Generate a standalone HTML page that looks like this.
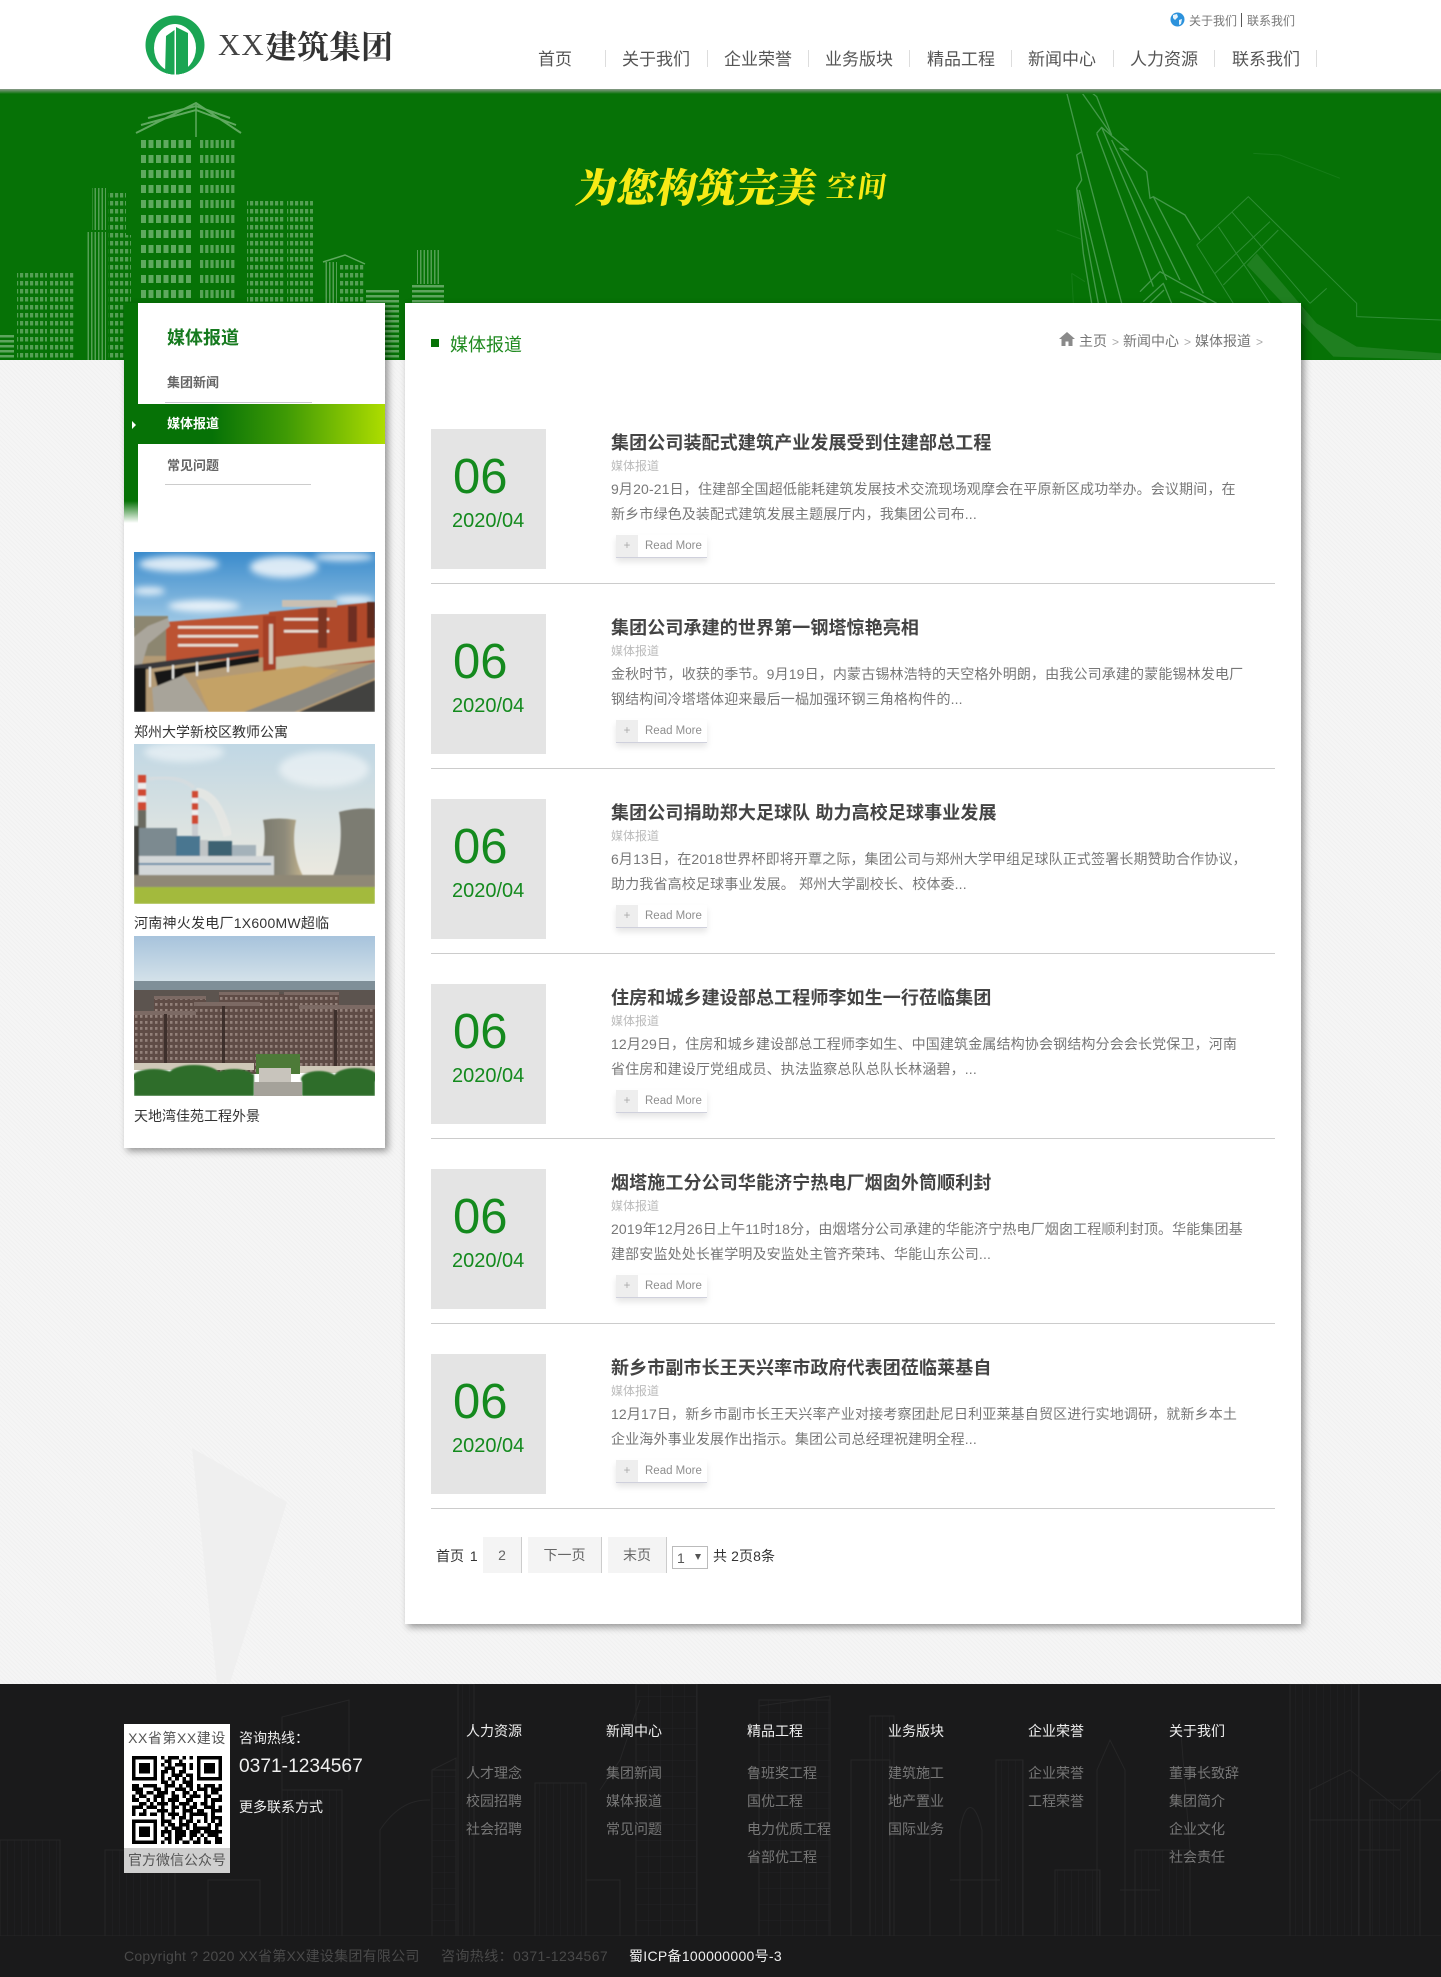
<!DOCTYPE html>
<html lang="zh-CN">
<head>
<meta charset="utf-8">
<title>媒体报道</title>
<style>
*{margin:0;padding:0;box-sizing:border-box}
html,body{width:1441px;height:1977px;overflow:hidden;background:#f3f3f3}
body{position:relative;font-family:"Liberation Sans","Noto Sans CJK SC",sans-serif;font-size:14px;color:#555}
.a{position:absolute;white-space:nowrap}
.hatch{position:absolute;left:0;top:360px;width:1441px;height:1324px;background:repeating-linear-gradient(45deg,#f1f1f1 0 1px,#f5f5f5 1px 3px)}
.nav{font-size:17px;line-height:24px;top:48px;color:#555}
.sep{position:absolute;top:50px;width:1px;height:17px;background:#ddd}
.card{position:absolute;background:#fff;box-shadow:3px 3px 7px rgba(0,0,0,.4)}
.item{position:absolute;left:431px;width:844px;height:155px;border-bottom:1px solid #ccc}
.box{position:absolute;left:0;top:0;width:115px;height:140px;background:#e4e4e4}
.d1{position:absolute;left:22px;top:19px;font-size:49px;line-height:58px;color:#148a1e;white-space:nowrap}
.d2{position:absolute;left:21px;top:80px;font-size:20px;line-height:24px;color:#148a1e;white-space:nowrap}
.t{position:absolute;left:180px;top:2px;font-size:18px;line-height:24px;font-weight:700;color:#444;white-space:nowrap;letter-spacing:.12px}
.c{position:absolute;left:180px;top:29px;font-size:12px;line-height:16px;color:#bbb;white-space:nowrap}
.l{position:absolute;left:180px;font-size:14px;line-height:22px;color:#777;white-space:nowrap;letter-spacing:.15px}
.l1{top:49px}.l2{top:74px}
.rm{position:absolute;left:185px;top:106px;width:91px;height:23px;background:#fff;border-bottom:1px solid #cfd0dc;box-shadow:0 4px 6px rgba(0,0,0,.1);font-size:11.5px;line-height:22px;color:#8e8e8e}
.rm i{position:absolute;left:0;top:0;width:22px;height:22px;background:#eeeeee;font-style:normal;text-align:center;color:#aaa}
.rm span{position:absolute;left:29px;top:0}
.pg{position:absolute;top:1537px;height:36px;background:#f4f4f4;border-right:1px solid #ccc;line-height:37px;text-align:center;color:#666}
.fh{top:1720px;line-height:22px;color:#eee;font-size:14px}
.fi{line-height:22px;color:#777;font-size:14px}
.cap{font-size:14px;line-height:20px;color:#333;left:134px}
</style>
</head>
<body>
<div class="hatch"></div>
<svg class="a" style="left:0;top:1400px" width="420" height="290"><polygon points="192,48 287,102 230,283 217,283" fill="#eeeeee" opacity=".9"/></svg>

<!-- banner -->
<svg class="a" style="left:0;top:90px" width="1441" height="270" viewBox="0 90 1441 270">
<defs>
<pattern id="w1" width="7.5" height="15" patternUnits="userSpaceOnUse" x="141" y="137"><rect x="0" y="3" width="5" height="8" fill="#5fa95f"/></pattern>
<pattern id="w2" width="5.2" height="15" patternUnits="userSpaceOnUse" x="200" y="137"><rect x="0" y="3" width="3.2" height="8" fill="#58a458"/></pattern>
<pattern id="w3" width="5" height="8" patternUnits="userSpaceOnUse"><rect x="0" y="1" width="3.2" height="4.5" fill="#549f54"/></pattern>
<pattern id="st" width="4" height="5" patternUnits="userSpaceOnUse"><rect width="4" height="2.5" fill="#5ea55e"/></pattern>
<pattern id="vs" width="3.5" height="6" patternUnits="userSpaceOnUse"><rect width="1.5" height="6" fill="#549f54"/></pattern>
</defs>
<rect x="0" y="90" width="1441" height="270" fill="#067206"/>
<!-- main tower -->
<rect x="141" y="137" width="52" height="170" fill="url(#w1)"/>
<rect x="200" y="137" width="36" height="170" fill="url(#w2)"/>
<g fill="none" stroke="#5fa95f" stroke-width="2"><path d="M136 133L196 103L241 133M141 125L196 110L236 125M148 118L196 106L230 118"/></g>
<path d="M196 103V137" stroke="#5fa95f" stroke-width="1.5"/>
<!-- left tall -->
<rect x="92" y="188" width="14" height="42" fill="url(#vs)"/>
<rect x="108" y="190" width="18" height="45" fill="url(#w3)"/>
<rect x="86" y="232" width="20" height="128" fill="url(#vs)"/>
<rect x="108" y="235" width="23" height="125" fill="url(#w3)"/>
<!-- left small -->
<rect x="17" y="272" width="30" height="88" fill="url(#w3)"/>
<rect x="50" y="272" width="25" height="88" fill="url(#w3)"/>
<rect x="0" y="334" width="14" height="26" fill="url(#st)"/>
<!-- right of tower -->
<rect x="247" y="198" width="37" height="110" fill="url(#w3)"/>
<rect x="287" y="198" width="26" height="110" fill="url(#w3)"/>
<rect x="325" y="262" width="12" height="46" fill="url(#vs)"/>
<rect x="340" y="262" width="25" height="46" fill="url(#w3)"/>
<path d="M323 262L345 255L365 264" fill="none" stroke="#5fa95f" stroke-width="1.5"/>
<rect x="366" y="288" width="33" height="72" fill="url(#st)"/>
<rect x="417" y="250" width="23" height="34" fill="url(#vs)"/>
<rect x="412" y="284" width="32" height="24" fill="url(#st)"/>
<!-- right line art -->
<g transform="translate(1040,90) scale(.33333)">
<polygon points="620,525 650,490 830,700 950,770 1203,790 1203,810 880,800" fill="#3d9140" opacity=".45"/>
<g fill="none" stroke="#44994a" stroke-width="4" stroke-linejoin="round">
<path d="M78 0L125 185L110 195L125 270L110 295L130 490L155 640"/>
<path d="M125 185L245 640M118 300L200 640M112 300L175 640"/>
<path d="M120 0L215 135M145 0L170 20L215 135"/>
<path d="M170 130L185 112L265 180L240 175L320 245L330 325L340 320L435 375L480 450"/>
<path d="M170 130L340 590M185 112L380 570M215 150L420 570M340 320L490 610"/>
<path d="M300 605L360 545L530 640M310 635L370 580L395 640M420 605L500 640M330 640L372 600"/>
</g>
<g fill="none" stroke="#2f8d35" stroke-width="3">
<path d="M470 465L625 320L950 640L950 680L1203 690M470 465L580 640M535 410L690 640M575 365L810 640M525 550L690 395M550 585L715 420M810 640L860 595"/>
<path d="M640 190L720 195L900 265M50 420L130 450M95 550L135 575M95 550L100 640" opacity=".4"/>
</g>
</g>
</svg>
<div class="a" style="left:0;top:89px;width:1441px;height:5px;background:linear-gradient(#8a9a8a,#067206)"></div>

<!-- slogan -->
<div class="a" style="left:573px;top:161px;font-family:'Noto Serif CJK SC','WenQuanYi Zen Hei',serif;font-weight:900;font-size:40px;line-height:50px;color:#f7ea16;transform:skewX(-10deg);transform-origin:left bottom">为您构筑完美</div>
<div class="a" style="left:824px;top:166px;font-family:'Noto Serif CJK SC','WenQuanYi Zen Hei',serif;font-weight:700;font-size:29px;line-height:40px;color:#f7ea16;letter-spacing:2px;transform:skewX(-8deg);transform-origin:left bottom">空间</div>

<!-- header -->
<div class="a" style="left:0;top:0;width:1441px;height:89px;background:#fff"></div>
<svg class="a" style="left:145px;top:15px" width="60" height="60" viewBox="0 0 60 60">
<defs><clipPath id="cc"><ellipse cx="30" cy="30" rx="29.5" ry="29.5"/></clipPath></defs>
<circle cx="30" cy="30" r="29.5" fill="#1aa553"/>
<ellipse cx="30" cy="33" rx="21" ry="24" fill="#fff"/>
<g clip-path="url(#cc)">
<path d="M20 60L21 21L29.5 15V60ZM31 60V12L43 18V60Z" fill="#1aa553"/>
<rect x="13" y="55" width="34" height="6" fill="#1aa553"/>
<rect x="29.5" y="10" width="1.5" height="50" fill="#fff"/>
</g>
</svg>
<div class="a" style="left:218px;top:24px;font-family:'Liberation Serif',serif;font-size:31px;line-height:42px;color:#444;letter-spacing:1px">XX</div>
<div class="a" style="left:265px;top:22px;font-family:'Noto Serif CJK SC',serif;font-weight:700;font-size:32px;line-height:46px;color:#333">建筑集团</div>

<svg class="a" style="left:1170px;top:12px" width="15" height="15" viewBox="0 0 15 15"><circle cx="7.5" cy="7.5" r="7" fill="#2c92dc"/><path d="M3 3L7 2L8 5L5 8L3 6ZM9 8L12 7L11 12L9 13Z" fill="#e8f4fc"/></svg>
<div class="a" style="left:1189px;top:12px;font-size:12px;line-height:18px;color:#777">关于我们</div>
<div class="a" style="left:1241px;top:13px;width:1px;height:14px;background:#555"></div>
<div class="a" style="left:1247px;top:12px;font-size:12px;line-height:18px;color:#777">联系我们</div>

<div class="a nav" style="left:538px">首页</div>
<div class="a nav" style="left:622px">关于我们</div>
<div class="a nav" style="left:724px">企业荣誉</div>
<div class="a nav" style="left:825px">业务版块</div>
<div class="a nav" style="left:927px">精品工程</div>
<div class="a nav" style="left:1028px">新闻中心</div>
<div class="a nav" style="left:1130px">人力资源</div>
<div class="a nav" style="left:1232px">联系我们</div>
<i class="sep" style="left:605px"></i><i class="sep" style="left:707px"></i><i class="sep" style="left:808px"></i><i class="sep" style="left:909px"></i><i class="sep" style="left:1011px"></i><i class="sep" style="left:1113px"></i><i class="sep" style="left:1214px"></i><i class="sep" style="left:1316px"></i>

<!-- sidebar -->
<div class="card" style="left:124px;top:303px;width:261px;height:845px"></div>
<div class="a" style="left:124px;top:303px;width:14px;height:220px;background:linear-gradient(#067206 0,#067206 90%,#fff 100%)"></div>
<div class="a" style="left:167px;top:325px;font-size:18px;line-height:26px;font-weight:700;color:#167a1f">媒体报道</div>
<div class="a" style="left:167px;top:373px;font-size:13px;line-height:20px;color:#666;font-weight:700">集团新闻</div>
<div class="a" style="left:165px;top:402px;width:147px;height:1px;background:#c8c8d0"></div>
<div class="a" style="left:138px;top:404px;width:247px;height:40px;background:linear-gradient(90deg,#067206 0,#067206 30%,#3f9a05 60%,#aedd00 100%)"></div>
<div class="a" style="left:167px;top:414px;font-size:13px;line-height:20px;color:#fff;font-weight:700">媒体报道</div>
<div class="a" style="left:132px;top:421px;width:0;height:0;border-left:4px solid #fff;border-top:4px solid transparent;border-bottom:4px solid transparent"></div>
<div class="a" style="left:167px;top:456px;font-size:13px;line-height:20px;color:#666;font-weight:700">常见问题</div>
<div class="a" style="left:165px;top:484px;width:146px;height:1px;background:#ccc"></div>

<!-- image 1 -->
<svg class="a" style="left:134px;top:552px" width="241" height="160" viewBox="0 0 241 160">
<defs><linearGradient id="s1" x1="0" y1="0" x2="0" y2="1"><stop offset="0" stop-color="#3a8bcc"/><stop offset="1" stop-color="#a3cbe6"/></linearGradient>
<filter id="b3"><feGaussianBlur stdDeviation="3.5"/></filter>
<filter id="b1"><feGaussianBlur stdDeviation=".7"/></filter></defs>
<rect width="241" height="76" fill="url(#s1)"/>
<g fill="#fff" opacity=".8" filter="url(#b3)"><ellipse cx="45" cy="12" rx="40" ry="8"/><ellipse cx="150" cy="15" rx="34" ry="11"/><ellipse cx="210" cy="5" rx="30" ry="4"/><ellipse cx="15" cy="39" rx="16" ry="4"/><ellipse cx="70" cy="54" rx="36" ry="6"/><ellipse cx="220" cy="48" rx="20" ry="4"/></g>
<g filter="url(#b1)">
<rect y="100" width="241" height="60" fill="#b39a74"/>
<rect x="0" y="64" width="34" height="40" fill="#8c8670"/>
<polygon points="135,60 241,50 241,110 135,118" fill="#b04a2c"/>
<rect x="148" y="48" width="55" height="7" fill="#c9bfb2"/>
<polygon points="32,70 135,62 135,105 32,112" fill="#bc5232"/>
<g fill="#e9dfd3"><rect x="44" y="74" width="80" height="2.5"/><rect x="44" y="83" width="80" height="2.5"/><rect x="44" y="92" width="60" height="2.5"/><rect x="150" y="66" width="45" height="2.5"/><rect x="150" y="78" width="45" height="2.5"/></g>
<rect x="129" y="64" width="13" height="62" fill="#a63f26"/><g fill="#d5c4b4"><rect x="135" y="72" width="4" height="40"/></g>
<rect x="184" y="56" width="9" height="40" fill="#7e3423"/><rect x="214" y="54" width="9" height="36" fill="#6e2e20"/><rect x="233" y="50" width="8" height="36" fill="#5e2a1c"/>
<polygon points="142,105 241,94 241,108 142,120" fill="#c6bc9e"/>
<polygon points="0,85 14,74 34,66 36,74 14,92 8,112 0,113" fill="#aaa69c"/>
<polygon points="0,113 125,97 125,102 0,119" fill="#37373a"/>
<polygon points="20,120 125,103 125,110 50,122 25,140" fill="#161616"/>
<g fill="#e8e8e4"><rect x="15" y="115" width="2" height="20"/><rect x="38" y="113" width="2" height="14"/><rect x="62" y="110" width="2" height="14"/><rect x="93" y="106" width="2" height="14"/></g>
<polygon points="62,128 170,114 205,118 130,160 75,160" fill="#c4a266"/>
<polygon points="18,136 50,123 75,160 20,160" fill="#a8a49a"/>
<polygon points="110,160 241,110 241,126 160,160" fill="#8c8a82"/>
<polygon points="165,160 241,128 241,160" fill="#42423f"/>
<rect x="0" y="116" width="12" height="44" fill="#151515"/>
</g>
</svg>
<div class="a cap" style="top:722px">郑州大学新校区教师公寓</div>

<!-- image 2 -->
<svg class="a" style="left:134px;top:744px" width="241" height="160" viewBox="0 0 241 160">
<defs><linearGradient id="s2" x1="0" y1="0" x2="0" y2="1"><stop offset="0" stop-color="#c0d7e4"/><stop offset="1" stop-color="#f0ebdf"/></linearGradient>
<linearGradient id="tw" x1="0" y1="0" x2="1" y2="0"><stop offset="0" stop-color="#77776c"/><stop offset=".6" stop-color="#8d8a7a"/><stop offset="1" stop-color="#c2b28c"/></linearGradient></defs>
<rect width="241" height="145" fill="url(#s2)"/>
<g fill="#fff" opacity=".5" filter="url(#b3)"><ellipse cx="50" cy="8" rx="40" ry="10"/><ellipse cx="190" cy="25" rx="45" ry="18"/></g>
<path d="M62 48C80 50 88 70 94 92" stroke="#e8e8e4" stroke-width="9" fill="none" opacity=".8" filter="url(#b1)"/>
<path d="M15 35C30 32 50 34 60 44" stroke="#ddd" stroke-width="4" fill="none" opacity=".5" filter="url(#b1)"/>
<g filter="url(#b1)">
<path d="M123 132C132 112 132 90 129 76Q145 73 162 76C158 95 160 115 169 132Z" fill="url(#tw)"/>
<path d="M199 132C208 110 208 85 205 68Q225 63 241 65V132Z" fill="#7c7c72"/>
<rect x="4" y="31" width="8" height="80" fill="#d04a30"/><rect x="4" y="39" width="8" height="6" fill="#eee"/><rect x="4" y="52" width="8" height="6" fill="#eee"/><rect x="4" y="66" width="8" height="40" fill="#6a6a60"/>
<rect x="58" y="47" width="6" height="60" fill="#d04a30"/><rect x="58" y="54" width="6" height="5" fill="#eee"/><rect x="58" y="66" width="6" height="5" fill="#eee"/><rect x="58" y="80" width="6" height="20" fill="#c8ccd0"/>
<rect x="0" y="82" width="5" height="58" fill="#3c3c38"/>
<rect x="5" y="84" width="38" height="28" fill="#7c8a90"/>
<rect x="42" y="92" width="24" height="22" fill="#4a7690"/>
<rect x="66" y="96" width="8" height="20" fill="#c0c4c6"/>
<rect x="74" y="97" width="24" height="22" fill="#3e6272"/><rect x="98" y="101" width="24" height="18" fill="#a4b2ba"/>
<rect x="5" y="112" width="135" height="22" fill="#d3d7d8"/><rect x="5" y="119" width="132" height="2" fill="#6d8fa8"/>
<rect x="0" y="131" width="241" height="12" fill="#8f8876"/>
<rect x="0" y="143" width="241" height="17" fill="#a3ba3e"/>
</g>
</svg>
<div class="a cap" style="top:913px;letter-spacing:.25px">河南神火发电厂1X600MW超临</div>

<!-- image 3 -->
<svg class="a" style="left:134px;top:936px" width="241" height="160" viewBox="0 0 241 160">
<defs><linearGradient id="s3" x1="0" y1="0" x2="0" y2="1"><stop offset="0" stop-color="#a7c3dc"/><stop offset="1" stop-color="#d6e3ea"/></linearGradient>
<pattern id="fl" width="5" height="6" patternUnits="userSpaceOnUse"><rect width="5" height="6" fill="#5f4c46"/><rect x="1" y="1" width="2.5" height="2.8" fill="#93817a"/></pattern></defs>
<rect width="241" height="48" fill="url(#s3)"/>
<rect y="45" width="241" height="40" fill="#7f8f98"/>
<rect y="54" width="241" height="65" fill="#5c544f"/>
<g fill="url(#fl)"><rect x="0" y="78" width="62" height="56"/><rect x="60" y="68" width="66" height="70"/><rect x="20" y="62" width="52" height="18"/><rect x="85" y="58" width="80" height="60"/><rect x="165" y="72" width="76" height="64"/><rect x="150" y="58" width="55" height="22"/></g>
<g fill="#7c6a64"><rect x="0" y="75" width="62" height="4"/><rect x="60" y="66" width="66" height="4"/><rect x="165" y="69" width="76" height="4"/><rect x="20" y="60" width="52" height="3"/><rect x="85" y="56" width="60" height="3"/><rect x="150" y="56" width="55" height="3"/></g>
<g fill="#3e302c"><rect x="30" y="78" width="3" height="56"/><rect x="88" y="70" width="3" height="60"/><rect x="200" y="74" width="3" height="60"/></g>
<rect x="0" y="127" width="120" height="7" fill="#cfc8b8"/><rect x="165" y="130" width="76" height="7" fill="#cfc8b8"/>
<rect x="122" y="118" width="44" height="20" fill="#4d7a38"/>
<rect x="125" y="132" width="32" height="14" fill="#c8c4bc"/>
<g fill="#2f6d2a" filter="url(#b1)"><rect x="0" y="138" width="120" height="22"/><ellipse cx="20" cy="141" rx="22" ry="8"/><ellipse cx="60" cy="138" rx="25" ry="9"/><ellipse cx="100" cy="141" rx="20" ry="8"/><rect x="168" y="142" width="73" height="18"/><ellipse cx="185" cy="143" rx="18" ry="8"/><ellipse cx="222" cy="141" rx="22" ry="9"/></g>
<rect x="120" y="146" width="48" height="14" fill="#a5a29a"/>
</svg>
<div class="a cap" style="top:1106px">天地湾佳苑工程外景</div>

<!-- main card -->
<div class="card" style="left:405px;top:303px;width:896px;height:1321px"></div>
<div class="a" style="left:431px;top:339px;width:8px;height:8px;background:#067206"></div>
<div class="a" style="left:450px;top:332px;font-size:18px;line-height:26px;color:#1f8a1f">媒体报道</div>
<svg class="a" style="left:1059px;top:332px" width="16" height="14" viewBox="0 0 16 14"><path d="M8 0L0 7H2.5V14H6.5V9.5H9.5V14H13.5V7H16Z" fill="#8a8a8a"/></svg>
<div class="a" style="left:1079px;top:331px;line-height:20px;color:#777">主页</div>
<div class="a" style="left:1112px;top:332px;font-size:12px;line-height:20px;color:#aaa">&gt;</div>
<div class="a" style="left:1123px;top:331px;line-height:20px;color:#777">新闻中心</div>
<div class="a" style="left:1184px;top:332px;font-size:12px;line-height:20px;color:#aaa">&gt;</div>
<div class="a" style="left:1195px;top:331px;line-height:20px;color:#777">媒体报道</div>
<div class="a" style="left:1256px;top:332px;font-size:12px;line-height:20px;color:#aaa">&gt;</div>

<div class="item" style="top:429px"><div class="box"></div><div class="d1">06</div><div class="d2">2020/04</div>
<div class="t">集团公司装配式建筑产业发展受到住建部总工程</div><div class="c">媒体报道</div>
<div class="l l1">9月20-21日，住建部全国超低能耗建筑发展技术交流现场观摩会在平原新区成功举办。会议期间，在</div>
<div class="l l2">新乡市绿色及装配式建筑发展主题展厅内，我集团公司布...</div>
<div class="rm"><i>+</i><span>Read More</span></div></div>

<div class="item" style="top:614px"><div class="box"></div><div class="d1">06</div><div class="d2">2020/04</div>
<div class="t">集团公司承建的世界第一钢塔惊艳亮相</div><div class="c">媒体报道</div>
<div class="l l1">金秋时节，收获的季节。9月19日，内蒙古锡林浩特的天空格外明朗，由我公司承建的蒙能锡林发电厂</div>
<div class="l l2">钢结构间冷塔塔体迎来最后一榀加强环钢三角格构件的...</div>
<div class="rm"><i>+</i><span>Read More</span></div></div>

<div class="item" style="top:799px"><div class="box"></div><div class="d1">06</div><div class="d2">2020/04</div>
<div class="t">集团公司捐助郑大足球队 助力高校足球事业发展</div><div class="c">媒体报道</div>
<div class="l l1">6月13日，在2018世界杯即将开覃之际，集团公司与郑州大学甲组足球队正式签署长期赞助合作协议，</div>
<div class="l l2">助力我省高校足球事业发展。 郑州大学副校长、校体委...</div>
<div class="rm"><i>+</i><span>Read More</span></div></div>

<div class="item" style="top:984px"><div class="box"></div><div class="d1">06</div><div class="d2">2020/04</div>
<div class="t">住房和城乡建设部总工程师李如生一行莅临集团</div><div class="c">媒体报道</div>
<div class="l l1">12月29日，住房和城乡建设部总工程师李如生、中国建筑金属结构协会钢结构分会会长党保卫，河南</div>
<div class="l l2">省住房和建设厅党组成员、执法监察总队总队长林涵碧，...</div>
<div class="rm"><i>+</i><span>Read More</span></div></div>

<div class="item" style="top:1169px"><div class="box"></div><div class="d1">06</div><div class="d2">2020/04</div>
<div class="t">烟塔施工分公司华能济宁热电厂烟囱外筒顺利封</div><div class="c">媒体报道</div>
<div class="l l1">2019年12月26日上午11时18分，由烟塔分公司承建的华能济宁热电厂烟囱工程顺利封顶。华能集团基</div>
<div class="l l2">建部安监处处长崔学明及安监处主管齐荣玮、华能山东公司...</div>
<div class="rm"><i>+</i><span>Read More</span></div></div>

<div class="item" style="top:1354px"><div class="box"></div><div class="d1">06</div><div class="d2">2020/04</div>
<div class="t">新乡市副市长王天兴率市政府代表团莅临莱基自</div><div class="c">媒体报道</div>
<div class="l l1">12月17日，新乡市副市长王天兴率产业对接考察团赴尼日利亚莱基自贸区进行实地调研，就新乡本土</div>
<div class="l l2">企业海外事业发展作出指示。集团公司总经理祝建明全程...</div>
<div class="rm"><i>+</i><span>Read More</span></div></div>

<!-- pagination -->
<div class="a" style="left:436px;top:1546px;line-height:20px;color:#333">首页 <span style="margin-left:2px">1</span></div>
<div class="pg" style="left:483px;width:39px">2</div>
<div class="pg" style="left:528px;width:74px">下一页</div>
<div class="pg" style="left:608px;width:59px">末页</div>
<div class="a" style="left:672px;top:1546px;width:36px;height:23px;border:1px solid #bbb;background:#fff;line-height:23px;padding-left:4px;color:#555">1<span style="position:absolute;left:22px;top:7px;width:0;height:0;border-left:3px solid transparent;border-right:3px solid transparent;border-top:6px solid #555"></span></div>
<div class="a" style="left:713px;top:1546px;line-height:20px;color:#333;letter-spacing:.1px">共 2页8条</div>

<!-- footer -->
<div class="a" style="left:0;top:1684px;width:1441px;height:293px;background:#1a1a1b"></div>
<svg class="a" style="left:0;top:1684px" width="1441" height="252" viewBox="0 1684 1441 252">
<defs>
<pattern id="fg" width="12" height="16" patternUnits="userSpaceOnUse"><path d="M0 0H12M0 0V16" stroke="#232324" stroke-width="1" fill="none"/></pattern>
<pattern id="fv" width="7" height="20" patternUnits="userSpaceOnUse"><path d="M0 0V20" stroke="#232324" stroke-width="1" fill="none"/></pattern>
</defs>
<g fill="none" stroke="#262627" stroke-width="1">
<rect x="0" y="1840" width="60" height="96" fill="url(#fv)"/>
<rect x="105" y="1850" width="70" height="86" fill="url(#fv)"/>
<path d="M208 1936V1880H260V1936M282 1936V1717L349 1700V1780"/>
<rect x="282" y="1790" width="60" height="146" fill="url(#fv)"/>
<path d="M380 1936V1830C400 1800 420 1800 430 1800"/>
<rect x="432" y="1770" width="24" height="166" fill="url(#fg)"/>
<path d="M432 1770L456 1758V1936"/>
<rect x="458" y="1684" width="16" height="252" fill="url(#fv)"/>
<rect x="535" y="1783" width="51" height="153" fill="url(#fv)"/>
<path d="M586 1936V1783M586 1880H620V1936M600 1790L620 1760L640 1700"/>
<rect x="636" y="1684" width="61" height="252" fill="url(#fg)"/>
<rect x="759" y="1700" width="71" height="236" fill="url(#fg)"/>
<path d="M759 1706L830 1696V1936M851 1936V1760H890V1936"/>
<rect x="870" y="1716" width="24" height="220" fill="url(#fv)"/>
<path d="M930 1936V1770M960 1936V1830C965 1800 975 1800 982 1830V1936M950 1880H1000"/>
<rect x="996" y="1760" width="27" height="176" fill="url(#fv)"/>
<rect x="1055" y="1870" width="45" height="66" fill="url(#fv)"/>
<path d="M1097 1936V1770L1110 1740L1125 1770V1936M1120 1890H1160M1180 1720L1190 1850V1936"/>
<rect x="1135" y="1850" width="55" height="86" fill="url(#fv)"/>
<rect x="1290" y="1684" width="69" height="252" fill="url(#fv)"/>
<path d="M1310 1936V1790L1350 1770L1400 1810L1441 1770M1310 1820H1441M1359 1850H1400"/>
<rect x="1370" y="1800" width="50" height="136" fill="url(#fv)"/>
<path d="M0 1936H1441"/>
</g>
</svg>

<div class="a" style="left:124px;top:1724px;width:106px;height:149px;background:#fff"></div>
<div class="a" style="left:124px;top:1728px;width:106px;text-align:center;line-height:20px;font-size:14px;color:#555;letter-spacing:.55px">XX省第XX建设</div>
<svg class="a" style="left:132px;top:1756px" width="90" height="88" viewBox="0 0 25 25" preserveAspectRatio="none" shape-rendering="crispEdges">
<path fill="none" stroke="#000" stroke-width="1" d="M0 .5h7M8 .5h1M10 .5h3M14 .5h1M16 .5h1M18 .5h7M0 1.5h1M6 1.5h1M9 1.5h2M13 1.5h1M18 1.5h1M24 1.5h1M0 2.5h1M2 2.5h3M6 2.5h1M8 2.5h1M10 2.5h1M12 2.5h3M16 2.5h1M18 2.5h1M20 2.5h3M24 2.5h1M0 3.5h1M2 3.5h3M6 3.5h1M9 3.5h3M14 3.5h1M16 3.5h1M18 3.5h1M20 3.5h3M24 3.5h1M0 4.5h1M2 4.5h3M6 4.5h1M8 4.5h2M11 4.5h1M13 4.5h2M18 4.5h1M20 4.5h3M24 4.5h1M0 5.5h1M6 5.5h1M8 5.5h1M11 5.5h3M15 5.5h2M18 5.5h1M24 5.5h1M0 6.5h7M8 6.5h1M10 6.5h1M12 6.5h1M14 6.5h1M16 6.5h1M18 6.5h7M8 7.5h2M11 7.5h1M14 7.5h3M0 8.5h2M3 8.5h4M9 8.5h3M13 8.5h1M15 8.5h2M18 8.5h1M20 8.5h3M24 8.5h1M0 9.5h3M6 9.5h2M9 9.5h1M12 9.5h3M16 9.5h1M18 9.5h3M22 9.5h3M1 10.5h2M4 10.5h2M7 10.5h3M11 10.5h1M14 10.5h2M17 10.5h1M20 10.5h1M22 10.5h2M0 11.5h1M2 11.5h2M6 11.5h3M11 11.5h2M14 11.5h1M16 11.5h3M20 11.5h2M24 11.5h1M0 12.5h2M4 12.5h1M6 12.5h1M8 12.5h1M10 12.5h3M15 12.5h2M20 12.5h1M22 12.5h3M2 13.5h2M5 13.5h1M7 13.5h3M11 13.5h1M13 13.5h3M17 13.5h1M19 13.5h2M22 13.5h1M0 14.5h3M4 14.5h3M8 14.5h1M11 14.5h2M14 14.5h1M16 14.5h2M20 14.5h3M24 14.5h1M0 15.5h1M3 15.5h1M7 15.5h3M11 15.5h1M14 15.5h3M18 15.5h2M22 15.5h3M0 16.5h1M2 16.5h2M5 16.5h2M8 16.5h1M10 16.5h3M14 16.5h1M16 16.5h5M22 16.5h1M8 17.5h1M11 17.5h1M13 17.5h2M16 17.5h1M20 17.5h1M22 17.5h3M0 18.5h7M8 18.5h3M13 18.5h1M15 18.5h2M18 18.5h1M20 18.5h1M22 18.5h1M24 18.5h1M0 19.5h1M6 19.5h1M8 19.5h1M10 19.5h2M13 19.5h3M17 19.5h1M21 19.5h1M23 19.5h2M0 20.5h1M2 20.5h3M6 20.5h1M9 20.5h1M11 20.5h3M15 20.5h1M17 20.5h5M23 20.5h1M0 21.5h1M2 21.5h3M6 21.5h1M8 21.5h3M12 21.5h3M16 21.5h3M20 21.5h5M0 22.5h1M2 22.5h3M6 22.5h1M8 22.5h1M10 22.5h1M12 22.5h3M16 22.5h2M19 22.5h1M21 22.5h3M0 23.5h1M6 23.5h1M9 23.5h2M12 23.5h2M16 23.5h1M18 23.5h1M20 23.5h1M23 23.5h2M0 24.5h7M8 24.5h1M10 24.5h1M12 24.5h1M14 24.5h2M17 24.5h2M20 24.5h2M23 24.5h2"/>
</svg>
<div class="a" style="left:124px;top:1848px;width:106px;height:25px;background:#cfcfcf;text-align:center;line-height:25px;font-size:14px;color:#555">官方微信公众号</div>

<div class="a" style="left:239px;top:1728px;line-height:20px;color:#eee">咨询热线：</div>
<div class="a" style="left:239px;top:1755px;font-size:19.2px;line-height:24px;color:#f0f0f0">0371-1234567</div>
<div class="a" style="left:239px;top:1797px;line-height:20px;color:#eee">更多联系方式</div>

<div class="a fh" style="left:466px">人力资源</div>
<div class="a fi" style="left:466px;top:1762px">人才理念</div><div class="a fi" style="left:466px;top:1790px">校园招聘</div><div class="a fi" style="left:466px;top:1818px">社会招聘</div>
<div class="a fh" style="left:606px">新闻中心</div>
<div class="a fi" style="left:606px;top:1762px">集团新闻</div><div class="a fi" style="left:606px;top:1790px">媒体报道</div><div class="a fi" style="left:606px;top:1818px">常见问题</div>
<div class="a fh" style="left:747px">精品工程</div>
<div class="a fi" style="left:747px;top:1762px">鲁班奖工程</div><div class="a fi" style="left:747px;top:1790px">国优工程</div><div class="a fi" style="left:747px;top:1818px">电力优质工程</div><div class="a fi" style="left:747px;top:1846px">省部优工程</div>
<div class="a fh" style="left:888px">业务版块</div>
<div class="a fi" style="left:888px;top:1762px">建筑施工</div><div class="a fi" style="left:888px;top:1790px">地产置业</div><div class="a fi" style="left:888px;top:1818px">国际业务</div>
<div class="a fh" style="left:1028px">企业荣誉</div>
<div class="a fi" style="left:1028px;top:1762px">企业荣誉</div><div class="a fi" style="left:1028px;top:1790px">工程荣誉</div>
<div class="a fh" style="left:1169px">关于我们</div>
<div class="a fi" style="left:1169px;top:1762px">董事长致辞</div><div class="a fi" style="left:1169px;top:1790px">集团简介</div><div class="a fi" style="left:1169px;top:1818px">企业文化</div><div class="a fi" style="left:1169px;top:1846px">社会责任</div>

<div class="a" style="left:124px;top:1946px;line-height:20px;color:#4a4a4a;letter-spacing:.25px">Copyright ? 2020 XX省第XX建设集团有限公司</div>
<div class="a" style="left:441px;top:1946px;line-height:20px;color:#4a4a4a;letter-spacing:.4px">咨询热线：0371-1234567</div>
<div class="a" style="left:629px;top:1946px;line-height:20px;color:#eee;letter-spacing:.3px">蜀ICP备100000000号-3</div>
</body>
</html>
